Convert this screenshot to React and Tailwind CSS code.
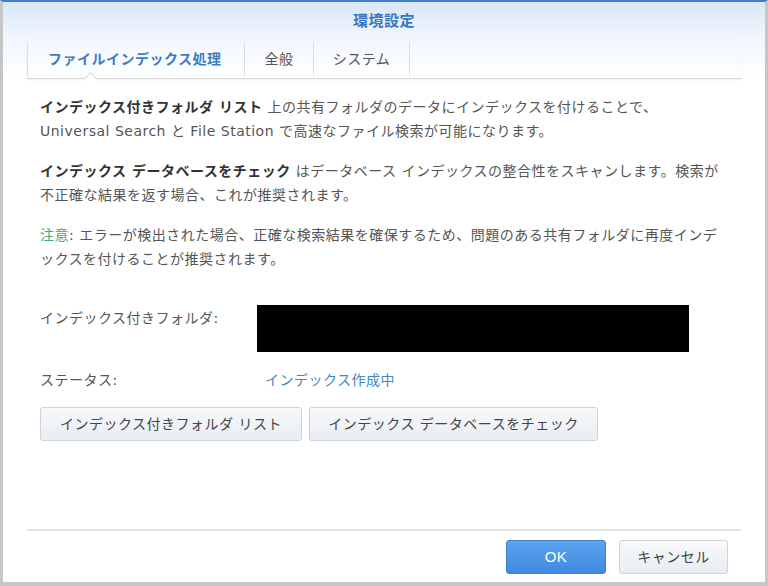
export default function App() {
    const font = { fontFamily: '"DejaVu Sans", "Noto Sans CJK JP", sans-serif' };

    return (
        <div
            className="w-[768px] h-[586px] flex flex-col bg-white border-x-[3px] border-b-4 border-t-2 border-[#c6c6c6] border-t-[#3f7fc6] overflow-hidden text-[#555] tracking-[0.5px]"
            style={font}
        >
            {/* ── Header + tabs ── */}
            <div className="bg-gradient-to-b from-[#d9e7f7] via-[#f2f7fd] to-white shrink-0">
                <div className="h-[38px] flex items-center justify-center text-[15px] font-bold text-[#3a76bd]">
                    環境設定
                </div>
                <div className="relative mx-[24px] h-[39px] flex border-b border-[#d6d6d6] shadow-[0_1px_2px_rgba(0,0,0,0.07)]">
                    <div className="w-[217px] my-[2px] border-l border-[#dedede] flex items-center pl-[20px] text-[14px] font-bold text-[#3b7cc4]">
                        ファイルインデックス処理
                    </div>
                    <div className="w-[69px] my-[2px] border-l border-[#dedede] flex items-center justify-center text-[14px] text-[#555]">
                        全般
                    </div>
                    <div className="w-[97px] my-[2px] border-x border-[#dedede] flex items-center justify-center text-[14px] text-[#555]">
                        システム
                    </div>
                    {/* 選択タブの切り欠き */}
                    <div className="absolute left-[59px] bottom-[-5px] w-[9px] h-[9px] bg-white border-l border-t border-[#d6d6d6] rotate-45" />
                </div>
            </div>

            {/* ── 本文 ── */}
            <div className="flex-1 pl-[37px] pt-[16px] text-[14px] leading-[24px]">
                <p className="mb-4 whitespace-nowrap">
                    <b className="text-[#333]">インデックス付きフォルダ リスト</b> 上の共有フォルダのデータにインデックスを付けることで、
                    <br />
                    Universal Search と File Station で高速なファイル検索が可能になります。
                </p>
                <p className="mb-4 whitespace-nowrap">
                    <b className="text-[#333]">インデックス データベースをチェック</b> はデータベース インデックスの整合性をスキャンします。検索が
                    <br />
                    不正確な結果を返す場合、これが推奨されます。
                </p>
                <p className="whitespace-nowrap">
                    <span className="text-[#4aa872]">注意</span>: エラーが検出された場合、正確な検索結果を確保するため、問題のある共有フォルダに再度インデ
                    <br />
                    ックスを付けることが推奨されます。
                </p>

                <div className="mt-[34px] flex items-start">
                    <div className="w-[217px] pt-[3px] leading-[20px]">インデックス付きフォルダ:</div>
                    <div className="w-[432px] h-[47px] bg-black" />
                </div>

                <div className="mt-[18px] flex items-center leading-[20px]">
                    <div className="w-[217px]">ステータス:</div>
                    <div className="pl-[8px] text-[#3d89c7]">インデックス作成中</div>
                </div>

                <div className="mt-[17px] flex gap-[7px]">
                    <button
                        type="button"
                        className="w-[262px] h-[34px] rounded-[3px] border border-[#cdd4dc] bg-gradient-to-b from-[#f7f9fb] to-[#e8edf2] text-[14px] text-[#444] tracking-[0.5px]"
                    >
                        インデックス付きフォルダ リスト
                    </button>
                    <button
                        type="button"
                        className="w-[289px] h-[34px] rounded-[3px] border border-[#cdd4dc] bg-gradient-to-b from-[#f7f9fb] to-[#e8edf2] text-[14px] text-[#444] tracking-[0.5px]"
                    >
                        インデックス データベースをチェック
                    </button>
                </div>
            </div>

            {/* ── Footer ── */}
            <div className="mx-[24px] h-[53px] shrink-0 border-t-2 border-[#e4e4e4] flex items-start justify-end gap-[13px] pt-[9px] pr-[13px]">
                <button
                    type="button"
                    className="w-[100px] h-[34px] rounded-[3px] border border-[#3b82cf] bg-gradient-to-b from-[#5aa3ee] to-[#3f8ae0] text-[15px] text-white"
                    style={{ fontFamily: '"Liberation Sans", "Noto Sans CJK JP", sans-serif' }}
                >
                    OK
                </button>
                <button
                    type="button"
                    className="w-[109px] h-[34px] rounded-[3px] border border-[#cdd4dc] bg-gradient-to-b from-[#f7f9fb] to-[#e8edf2] text-[14px] text-[#444] tracking-[0.5px]"
                >
                    キャンセル
                </button>
            </div>
        </div>
    );
}
